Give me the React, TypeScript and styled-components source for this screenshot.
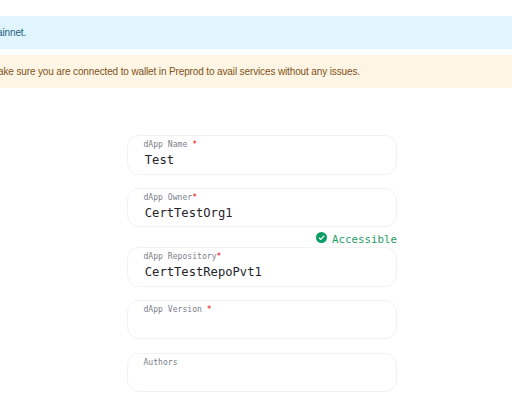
import React from "react";
import styled, { createGlobalStyle } from "styled-components";

const GlobalStyle = createGlobalStyle`
  * { box-sizing: border-box; }
  html, body { margin: 0; background: #fff; overflow: hidden; }
`;
const Page = styled.main`
  width: 512px;
  height: 401px;
  padding-top: 16px;
  overflow: hidden;
  background: #fff;
`;
const Banner = styled.div<{ $tone: "info" | "warning" }>`
  display: flex;
  align-items: center;
  height: 33px;
  margin-bottom: 6px;
  white-space: nowrap;
  font: 10px/16px "Liberation Sans", Arial, sans-serif;
  letter-spacing: -0.13px;
  background: ${(p) => (p.$tone === "info" ? "#e1f5fe" : "#fff5e4")};
  color: ${(p) => (p.$tone === "info" ? "#22607f" : "#7d5320")};
`;
const BannerText = styled.span<{ $shift: number }>`
  margin-left: ${(p) => p.$shift}px;
`;
const Form = styled.form`
  display: flex;
  flex-direction: column;
  gap: 13.8px;
  width: 270px;
  margin: 47.45px 0 0 127px;
  font-family: "DejaVu Sans Mono", monospace;
`;
const Group = styled.div`
  display: flex;
  flex-direction: column;
`;
const Field = styled.label`
  display: block;
  height: 39.1px;
  padding: 3px 15.5px 0;
  border: 1px solid #f2f2f2;
  border-radius: 12px;
`;
const Caption = styled.span`
  display: block;
  height: 12.6px;
  font-size: 8.1px;
  line-height: 10px;
  color: #7b7f8c;
`;
const Required = styled.span`
  color: #f00000;
`;
const Value = styled.span`
  display: block;
  padding-left: 1.3px;
  font-size: 12.15px;
  line-height: 16px;
  color: #25232c;
`;
const Status = styled.div`
  display: flex;
  align-items: center;
  justify-content: flex-end;
  gap: 5px;
  height: 20.05px;
  padding-top: 1px;
  font-size: 10.8px;
  color: #1f9d66;
`;
const StatusText = styled.span`
  padding-top: 3px;
`;

const CheckIcon = () => (
  <svg width="11" height="11" viewBox="0 0 22 22">
    <circle cx="11" cy="11" r="11" fill="#099d65" />
    <path d="M6 11.5l3.5 3.5 7-7.5" fill="none" stroke="#fff" strokeWidth="2.4" />
  </svg>
);

type InputProps = { label: string; required?: boolean; value?: string };
const Input = ({ label, required, value }: InputProps) => (
  <Field>
    <Caption>{label}{required && <Required>*</Required>}</Caption>
    <Value>{value}</Value>
  </Field>
);

export default function App() {
  return (
    <Page>
      <GlobalStyle />
      <Banner $tone="info"><BannerText $shift={-3}>ainnet.</BannerText></Banner>
      <Banner $tone="warning">
        <BannerText $shift={-2}>ake sure you are connected to wallet in Preprod to avail services without any issues.</BannerText>
      </Banner>
      <Form>
        <Input label="dApp Name " required value="Test" />
        <Group>
          <Input label="dApp Owner" required value="CertTestOrg1" />
          <Status><CheckIcon /><StatusText>Accessible</StatusText></Status>
          <Input label="dApp Repository" required value="CertTestRepoPvt1" />
        </Group>
        <Input label="dApp Version " required />
        <Input label="Authors" />
      </Form>
    </Page>
  );
}
